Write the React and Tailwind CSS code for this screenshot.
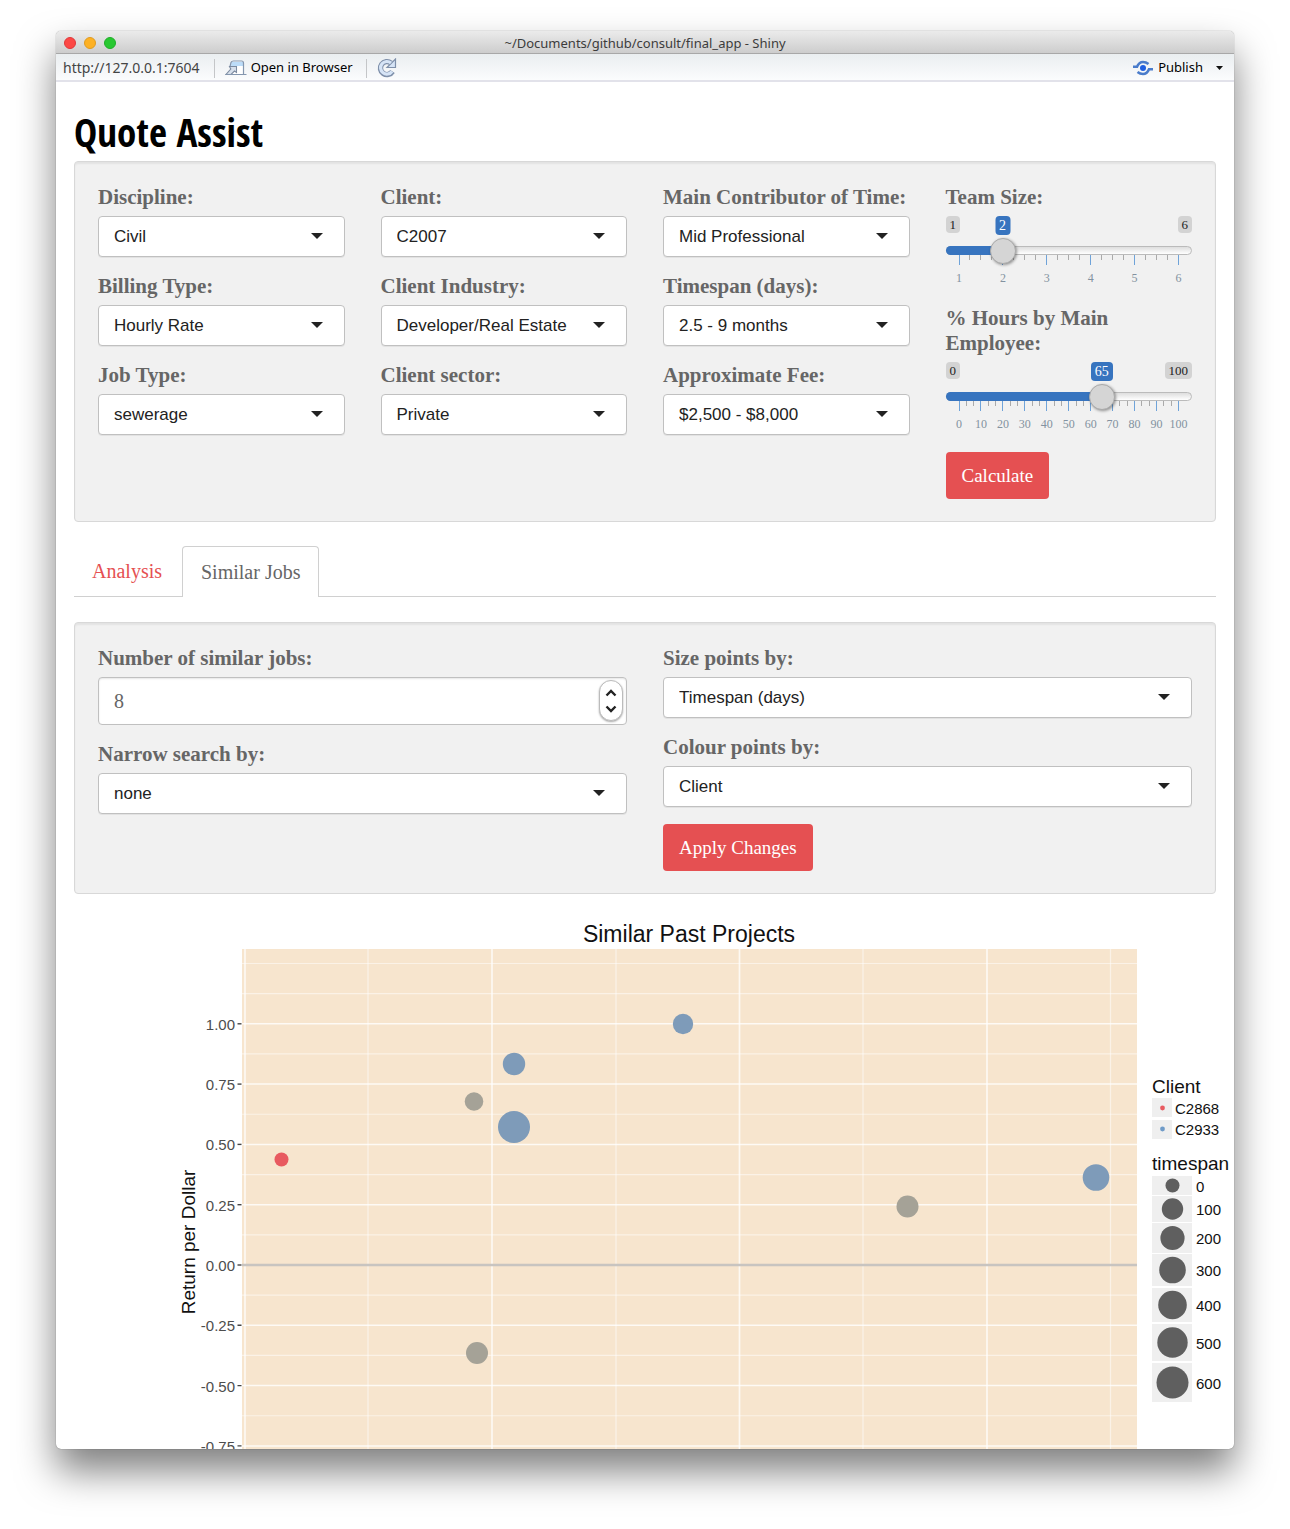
import React, { useState } from "react";

function Field({ id, label, children }) {
  return (
    <div className="flex flex-col gap-1.5">
      <label htmlFor={id} className="text-[21px] leading-[25px] font-bold text-[#666]">
        {label}
      </label>
      {children}
    </div>
  );
}

function SelectField({ id, label, value, options = [] }) {
  return (
    <Field id={id} label={label}>
      <div className="relative">
        <select
          id={id}
          defaultValue={value}
          className={'h-[41px] w-full appearance-none rounded border border-[#c0c0c0] bg-white pt-px pr-10 pl-[15px] font-["Liberation_Sans",sans-serif] text-[17px] text-[#222] shadow-[0_1px_0_rgba(0,0,0,0.06)]'}
        >
          {[value, ...options].map((o) => (
            <option key={o}>{o}</option>
          ))}
        </select>
        <svg viewBox="0 0 12 6" className="pointer-events-none absolute top-[17px] right-[22px] h-1.5 w-3" aria-hidden="true">
          <path d="M0 0h12L6 6z" fill="#222" />
        </svg>
      </div>
    </Field>
  );
}

function SliderField({ id, label, min, max, initial, labelStep, minorPerStep }) {
  const [value, setValue] = useState(initial);
  const ratio = (value - min) / (max - min);
  const center = `calc(13px + (100% - 26px) * ${ratio})`;
  const labels = [];
  for (let v = min; v <= max; v += labelStep) labels.push(v);
  const tickCount = (labels.length - 1) * minorPerStep + 1;
  return (
    <Field id={id} label={label}>
      <div className="flex h-[73px] flex-col">
        <div className="relative flex h-[30px] items-start justify-between text-[13px] leading-[17px] text-[#222]">
          <span className="rounded bg-[#d3d3d3] px-1">{min}</span>
          <span className="rounded bg-[#d3d3d3] px-1">{max}</span>
          <output
            htmlFor={id}
            className="absolute top-0 -translate-x-1/2 rounded bg-[#3774bf] px-1 text-sm leading-[19px] text-white"
            style={{ left: center }}
          >
            {value}
          </output>
        </div>
        <div className="relative z-10 grid h-[9px] items-center">
          <div className="h-[9px] rounded-full border border-[#bbb] bg-linear-to-b from-[#dedede] to-white [grid-area:1/1]" />
          <div className="h-[9px] rounded-l-full bg-[#3774bf] [grid-area:1/1]" style={{ width: center }} />
          <input
            id={id}
            type="range"
            min={min}
            max={max}
            value={value}
            onChange={(e) => setValue(Number(e.target.value))}
            className="h-[9px] w-full appearance-none bg-transparent [grid-area:1/1] [&::-webkit-slider-thumb]:h-[26px] [&::-webkit-slider-thumb]:w-[26px] [&::-webkit-slider-thumb]:appearance-none [&::-webkit-slider-thumb]:rounded-full [&::-webkit-slider-thumb]:border [&::-webkit-slider-thumb]:border-[#aaa] [&::-webkit-slider-thumb]:bg-[#d5d5d5] [&::-webkit-slider-thumb]:shadow-[1px_1px_3px_rgba(0,0,0,0.4)]"
          />
        </div>
        <div className="flex h-4 items-start justify-between px-[13px]">
          {Array.from({ length: tickCount }, (_, i) => (
            <span key={i} className={i % minorPerStep === 0 ? "h-2.5 w-px bg-[#6fa3d9]" : "h-[5px] w-px bg-[#aaa]"} />
          ))}
        </div>
        <div className="flex justify-between px-[13px] text-xs leading-[14px] text-[#8392a0]">
          {labels.map((v) => (
            <span key={v} className="flex w-px justify-center">
              {v}
            </span>
          ))}
        </div>
      </div>
    </Field>
  );
}

function Well({ children }) {
  return (
    <section className="rounded border border-[#d8d8d8] bg-[#f1f1f1] px-[23px] pt-[23px] pb-[22px] shadow-[inset_0_2px_2px_rgba(0,0,0,0.06)]">
      {children}
    </section>
  );
}

function RedButton({ children }) {
  return (
    <button type="button" className="h-[47px] self-start rounded bg-[#e55052] px-4 pt-px text-[19px] text-white">
      {children}
    </button>
  );
}

function TitleBar() {
  return (
    <header className="flex h-[23px] items-center border-b border-[#a8a8a8] bg-linear-to-b from-[#ebebeb] to-[#cdcdcd] px-2 pt-0.5">
      <div className="flex flex-1 gap-2">
        <span className="size-3 rounded-full border border-[#e0383a] bg-[#fc4845]" />
        <span className="size-3 rounded-full border border-[#e09b20] bg-[#fdb124]" />
        <span className="size-3 rounded-full border border-[#1fae28] bg-[#28c831]" />
      </div>
      <h2 className={'font-["Noto_Sans",sans-serif] text-[13px] leading-5 text-[#3c3c3c]'}>
        ~/Documents/github/consult/final_app - Shiny
      </h2>
      <div className="flex-1" />
    </header>
  );
}

function Toolbar() {
  return (
    <nav className={'flex h-7 items-center border-b-2 border-[#e2e2ea] bg-linear-to-b from-[#eaeef0] to-[#fbfcfd] pt-0.5 pr-[11px] pl-[7px] font-["Noto_Sans",sans-serif] text-[13px] text-black'}>
      <span className="text-sm text-[#444]">http://127.0.0.1:7604</span>
      <span className="ml-3.5 h-[19px] w-px bg-[#c4c6c8]" />
      <button type="button" className="ml-2.5 flex items-center gap-1">
        <svg viewBox="0 0 22 16" className="h-4 w-[22px]" aria-hidden="true">
          <path d="M6.500 2.500Q7 1 8.500 1H16.500Q18.500 1 18.500 3V14.500H6z" fill="#fff" />
          <path d="M6.500 2H18v4H6z" fill="#bcdcf8" />
          <path d="M5 6.500 6 2.500Q6.500 1 8.500 1H16.500Q18.500 1 18.500 3V14.500H21.500" fill="none" stroke="#8496ae" strokeWidth="1.200" />
          <path d="M4.500 6.500H11.500V12.500L9.500 11 6 14.500H1L5.800 9z" fill="#d7e0ec" stroke="#7d8ba0" strokeWidth="1.100" />
          <path d="M0.500 14.500H18.500" stroke="#8496ae" strokeWidth="1.200" />
        </svg>
        Open in Browser
      </button>
      <span className="ml-[13px] h-[19px] w-px bg-[#c4c6c8]" />
      <button type="button" aria-label="Reload" className="ml-2.5">
        <svg viewBox="0 0 20 20" className="size-5" aria-hidden="true">
          <path d="M15.500 13.500A6.500 6.500 0 1 1 14 5" fill="none" stroke="#7f90aa" strokeWidth="5.400" />
          <path d="M18.500 1v8.500H10z" fill="#d6e4f6" stroke="#7f90aa" strokeWidth="1.200" />
          <path d="M15 13.500A6.300 6.300 0 1 1 14 5" fill="none" stroke="#d6e4f6" strokeWidth="3.200" />
        </svg>
      </button>
      <div className="flex-1" />
      <button type="button" className="flex items-center gap-[5px]">
        <svg viewBox="0 0 20 16" className="h-4 w-5" aria-hidden="true">
          <circle cx="10" cy="8" r="3" fill="#1f5fe0" />
          <path d="M0 6.800H4Q6 2 10 2Q13 2 15.500 4M20 9.200H16Q14 14 10 14Q7 14 4.500 12" fill="none" stroke="#4a7ccb" strokeWidth="2.600" />
        </svg>
        Publish
      </button>
      <button type="button" aria-label="Publish options" className="ml-[13px]">
        <svg viewBox="0 0 7 4" className="block h-1 w-[7px]" aria-hidden="true">
          <path d="M0 0h7L3.500 4z" fill="#111" />
        </svg>
      </button>
    </nav>
  );
}

const Y0 = 1265;
const Y_UNIT = 241.2;
const MAJOR_Y = [1, 0.75, 0.5, 0.25, 0, -0.25, -0.5, -0.75];
const MINOR_Y = [1.25, 1.125, 0.875, 0.625, 0.375, 0.125, -0.125, -0.375, -0.625];
const MAJOR_X = [245, 492, 739.5, 987];
const MINOR_X = [368, 616, 863, 1110.5];
const yPos = (v) => Y0 - v * Y_UNIT;

const POINTS = [
  { x: 281.5, y: 1159.5, r: 7, c: "#e85a60" },
  { x: 474, y: 1101.5, r: 9.3, c: "#a5a297" },
  { x: 514, y: 1064, r: 11.2, c: "#7e9bb9" },
  { x: 514, y: 1127, r: 16, c: "#7e9bb9" },
  { x: 683, y: 1024, r: 10.2, c: "#7e9bb9" },
  { x: 477, y: 1353, r: 11, c: "#a5a297" },
  { x: 907.5, y: 1206.5, r: 11, c: "#a5a297" },
  { x: 1096, y: 1177.5, r: 13.3, c: "#7e9bb9" },
];

const SIZES = [
  { label: "0", top: 1176, bottom: 1195, r: 7 },
  { label: "100", top: 1196, bottom: 1222, r: 10.7 },
  { label: "200", top: 1223, bottom: 1253, r: 12.1 },
  { label: "300", top: 1254, bottom: 1286, r: 13.3 },
  { label: "400", top: 1288, bottom: 1322, r: 14.3 },
  { label: "500", top: 1324, bottom: 1361, r: 15.2 },
  { label: "600", top: 1363, bottom: 1402, r: 16 },
];

function Chart() {
  return (
    <svg
      viewBox="56 894 1178 555"
      role="img"
      aria-label="Similar Past Projects"
      className={'block w-full font-["Liberation_Sans",sans-serif]'}
    >
      <text x="689" y="942" textAnchor="middle" fontSize="23" fill="#111">Similar Past Projects</text>
      <rect x="242" y="949" width="895" height="510" fill="#f7e5ce" />
      {MINOR_Y.map((v) => (
        <path key={v} d={`M242 ${yPos(v)}H1137`} stroke="#fff" strokeOpacity="0.5" strokeWidth="1.2" />
      ))}
      {MINOR_X.map((x) => (
        <path key={x} d={`M${x} 949V1459`} stroke="#fff" strokeOpacity="0.5" strokeWidth="1.3" />
      ))}
      {MAJOR_Y.map((v) => (
        <path key={v} d={`M242 ${yPos(v)}H1137`} stroke="#fff" strokeOpacity="0.8" strokeWidth="1.5" />
      ))}
      {MAJOR_X.map((x) => (
        <path key={x} d={`M${x} 949V1459`} stroke="#fff" strokeOpacity="0.75" strokeWidth="1.7" />
      ))}
      <path d={`M242 ${Y0}H1137`} stroke="#c8c4c0" strokeWidth="2.4" />
      {MAJOR_Y.map((v) => (
        <g key={v}>
          <text x="235" y={yPos(v) + 6} textAnchor="end" fontSize="15" fill="#4d4d4d">{v.toFixed(2)}</text>
          <path d={`M237.5 ${yPos(v)}H241.5`} stroke="#444" strokeWidth="1.4" />
        </g>
      ))}
      <text transform="translate(195 1242) rotate(-90)" textAnchor="middle" fontSize="19" fill="#111">Return per Dollar</text>
      {POINTS.map((p, i) => (
        <circle key={i} cx={p.x} cy={p.y} r={p.r} fill={p.c} />
      ))}

      <text x="1152" y="1093" fontSize="19" fill="#111">Client</text>
      <rect x="1152" y="1098" width="20" height="19" fill="#efefef" />
      <rect x="1152" y="1120" width="20" height="19" fill="#efefef" />
      <circle cx="1162.5" cy="1108" r="2.4" fill="#e85a60" />
      <circle cx="1162.5" cy="1129" r="2.4" fill="#6f9bc8" />
      <text x="1175" y="1114" fontSize="15" fill="#111">C2868</text>
      <text x="1175" y="1135" fontSize="15" fill="#111">C2933</text>
      <text x="1152" y="1170" fontSize="19" fill="#111">timespan</text>
      {SIZES.map((s) => (
        <g key={s.label}>
          <rect x="1152" y={s.top} width="40" height={s.bottom - s.top} fill="#efefef" />
          <circle cx="1172.5" cy={(s.top + s.bottom) / 2} r={s.r} fill="#5f5f5f" />
          <text x="1196" y={(s.top + s.bottom) / 2 + 6} fontSize="15" fill="#111">{s.label}</text>
        </g>
      ))}
    </svg>
  );
}

function NumberField() {
  const [n, setN] = useState(8);
  return (
    <Field id="similar" label="Number of similar jobs:">
      <div className="relative">
        <input
          id="similar"
          type="number"
          value={n}
          onChange={(e) => setN(Number(e.target.value))}
          className="block h-12 w-full appearance-none rounded border border-[#c0c0c0] bg-white pr-10 pl-[15px] text-xl text-[#666] shadow-[inset_0_1px_2px_rgba(0,0,0,0.1)] [&::-webkit-inner-spin-button]:appearance-none"
        />
        <div className="absolute top-[3px] right-1 flex h-[41px] w-6 flex-col items-center justify-center gap-1 rounded-xl border border-[#bbb] bg-white shadow-[0_1px_2px_rgba(0,0,0,0.35)]">
          <button type="button" aria-label="Increase" onClick={() => setN(n + 1)}>
            <svg viewBox="0 0 12 8" className="block h-2 w-3" fill="none" stroke="#222" strokeWidth="2.4">
              <path d="M1.500 6.500 6 2l4.500 4.500" />
            </svg>
          </button>
          <button type="button" aria-label="Decrease" onClick={() => setN(n - 1)} className="mt-1">
            <svg viewBox="0 0 12 8" className="block h-2 w-3" fill="none" stroke="#222" strokeWidth="2.4">
              <path d="M1.500 1.500 6 6l4.500-4.500" />
            </svg>
          </button>
        </div>
      </div>
    </Field>
  );
}

export default function App() {
  return (
    <div className={'min-h-screen bg-white px-14 pt-[31px] pb-20 font-["Liberation_Serif",serif]'}>
      <div className="overflow-hidden rounded-[5px] bg-white shadow-[0_0_1px_rgba(0,0,0,0.6),0_22px_38px_rgba(0,0,0,0.5)]">
        <TitleBar />
        <Toolbar />
        <main>
          <div className="px-[18px] pt-[27px]">
            <h1 className={'pb-1.5 font-["Liberation_Sans_Narrow","Open_Sans_Condensed","Liberation_Sans",sans-serif] text-[39px] leading-[46px] font-bold text-black'}>
              Quote Assist
            </h1>
            <Well>
              <div className="grid grid-cols-4 gap-9">
                <div className="flex flex-col gap-[17px]">
                  <SelectField id="discipline" label="Discipline:" value="Civil" />
                  <SelectField id="billing" label="Billing Type:" value="Hourly Rate" />
                  <SelectField id="job" label="Job Type:" value="sewerage" />
                </div>
                <div className="flex flex-col gap-[17px]">
                  <SelectField id="client" label="Client:" value="C2007" />
                  <SelectField id="industry" label="Client Industry:" value="Developer/Real Estate" />
                  <SelectField id="sector" label="Client sector:" value="Private" />
                </div>
                <div className="flex flex-col gap-[17px]">
                  <SelectField id="contributor" label="Main Contributor of Time:" value="Mid Professional" />
                  <SelectField id="timespan" label="Timespan (days):" value="2.5 - 9 months" />
                  <SelectField id="fee" label="Approximate Fee:" value="$2,500 - $8,000" />
                </div>
                <div className="flex flex-col gap-[17px]">
                  <SliderField id="team" label="Team Size:" min={1} max={6} initial={2} labelStep={1} minorPerStep={4} />
                  <SliderField id="hours" label="% Hours by Main Employee:" min={0} max={100} initial={65} labelStep={10} minorPerStep={3} />
                  <RedButton>Calculate</RedButton>
                </div>
              </div>
            </Well>
            <div role="tablist" className="mt-6 mb-[25px] flex gap-0.5 border-b border-[#d0d0d0] text-xl">
              <button type="button" role="tab" aria-selected="false" className="h-[50px] px-[18px] text-[#e55052]">
                Analysis
              </button>
              <button type="button" role="tab" aria-selected="true" className="-mb-px h-[51px] rounded-t border border-b-0 border-[#d0d0d0] bg-white px-[18px] text-[#666]">
                Similar Jobs
              </button>
            </div>
            <Well>
              <div className="grid grid-cols-2 gap-9">
                <div className="flex flex-col gap-[17px]">
                  <NumberField />
                  <SelectField id="narrow" label="Narrow search by:" value="none" />
                </div>
                <div className="flex flex-col gap-[17px]">
                  <SelectField id="size" label="Size points by:" value="Timespan (days)" />
                  <SelectField id="colour" label="Colour points by:" value="Client" />
                  <RedButton>Apply Changes</RedButton>
                </div>
              </div>
            </Well>
          </div>
          <Chart />
        </main>
      </div>
    </div>
  );
}
